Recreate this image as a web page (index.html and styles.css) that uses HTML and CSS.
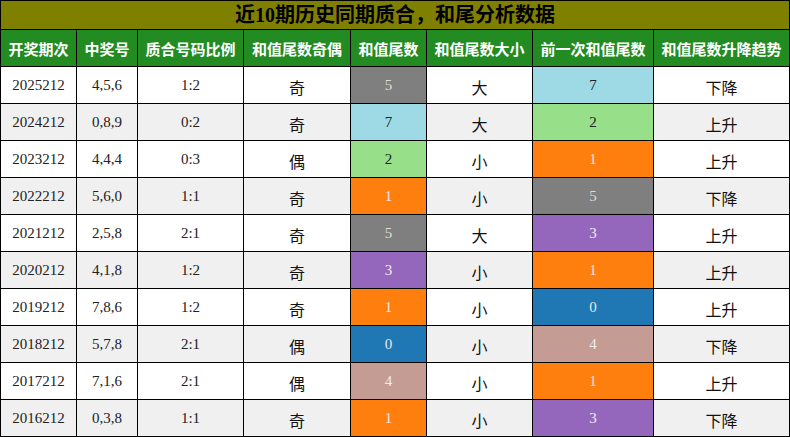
FILE: index.html
```html
<!DOCTYPE html>
<html lang="zh">
<head>
<meta charset="utf-8">
<title>近10期历史同期质合，和尾分析数据</title>
<link rel="stylesheet" href="styles.css">
</head>
<body>
<table class="tbl">
  <colgroup>
    <col class="c1"><col class="c2"><col class="c3"><col class="c4">
    <col class="c5"><col class="c6"><col class="c7"><col class="c8">
  </colgroup>
  <tr class="title-row"><td colspan="8" class="title">近10期历史同期质合，和尾分析数据</td></tr>
  <tr class="head-row">
    <th>开奖期次</th><th>中奖号</th><th>质合号码比例</th><th>和值尾数奇偶</th><th>和值尾数</th><th>和值尾数大小</th><th>前一次和值尾数</th><th>和值尾数升降趋势</th>
  </tr>
  <tr class="row"><td class="num">2025212</td><td class="num">4,5,6</td><td class="num">1:2</td><td class="cjk">奇</td><td class="num t5">5</td><td class="cjk">大</td><td class="num t7">7</td><td class="cjk">下降</td></tr>
  <tr class="row alt"><td class="num">2024212</td><td class="num">0,8,9</td><td class="num">0:2</td><td class="cjk">奇</td><td class="num t7">7</td><td class="cjk">大</td><td class="num t2">2</td><td class="cjk">上升</td></tr>
  <tr class="row"><td class="num">2023212</td><td class="num">4,4,4</td><td class="num">0:3</td><td class="cjk">偶</td><td class="num t2">2</td><td class="cjk">小</td><td class="num t1">1</td><td class="cjk">上升</td></tr>
  <tr class="row alt"><td class="num">2022212</td><td class="num">5,6,0</td><td class="num">1:1</td><td class="cjk">奇</td><td class="num t1">1</td><td class="cjk">小</td><td class="num t5">5</td><td class="cjk">下降</td></tr>
  <tr class="row"><td class="num">2021212</td><td class="num">2,5,8</td><td class="num">2:1</td><td class="cjk">奇</td><td class="num t5">5</td><td class="cjk">大</td><td class="num t3">3</td><td class="cjk">上升</td></tr>
  <tr class="row alt"><td class="num">2020212</td><td class="num">4,1,8</td><td class="num">1:2</td><td class="cjk">奇</td><td class="num t3">3</td><td class="cjk">小</td><td class="num t1">1</td><td class="cjk">上升</td></tr>
  <tr class="row"><td class="num">2019212</td><td class="num">7,8,6</td><td class="num">1:2</td><td class="cjk">奇</td><td class="num t1">1</td><td class="cjk">小</td><td class="num t0">0</td><td class="cjk">上升</td></tr>
  <tr class="row alt"><td class="num">2018212</td><td class="num">5,7,8</td><td class="num">2:1</td><td class="cjk">偶</td><td class="num t0">0</td><td class="cjk">小</td><td class="num t4">4</td><td class="cjk">下降</td></tr>
  <tr class="row"><td class="num">2017212</td><td class="num">7,1,6</td><td class="num">2:1</td><td class="cjk">偶</td><td class="num t4">4</td><td class="cjk">小</td><td class="num t1">1</td><td class="cjk">上升</td></tr>
  <tr class="row alt"><td class="num">2016212</td><td class="num">0,3,8</td><td class="num">1:1</td><td class="cjk">奇</td><td class="num t1">1</td><td class="cjk">小</td><td class="num t3">3</td><td class="cjk">下降</td></tr>
</table>
</body>
</html>
```
FILE: styles.css
```css
html, body {
  margin: 0;
  padding: 0;
  background: #ffffff;
}

.tbl {
  width: 789px;
  table-layout: fixed;
  border-collapse: collapse;
  font-family: "Liberation Serif", "Noto Sans CJK SC", serif;
}

.c1 { width: 76px; }
.c2 { width: 61px; }
.c3 { width: 106px; }
.c4 { width: 107px; }
.c5 { width: 76px; }
.c6 { width: 106px; }
.c7 { width: 121px; }
.c8 { width: 136px; }

.tbl td, .tbl th {
  border: 1px solid #000;
  padding: 0;
  text-align: center;
  vertical-align: middle;
  overflow: hidden;
  white-space: nowrap;
}

.title-row { height: 29px; }
.title {
  background: #808000;
  color: #000;
  font-family: "Liberation Serif", "Noto Sans CJK SC", serif;
  font-weight: bold;
  font-size: 20px;
  line-height: 26px;
}

.head-row { height: 37px; }
.head-row th {
  background: #228b22;
  color: #ffffff;
  font-family: "Noto Sans CJK SC", sans-serif;
  font-weight: bold;
  font-size: 15px;
}

.row { height: 37px; background: #ffffff; }
.row.alt { background: #f0f0f0; }

.num {
  font-family: "Liberation Serif", serif;
  font-size: 15px;
  color: #222;
}

.cjk {
  font-family: "Noto Sans CJK SC", sans-serif;
  font-size: 16px;
  color: #111;
  padding-top: 3px !important;
}

.t0 { background: #1f77b4; color: #e8e8e8; }
.t1 { background: #ff7f0e; color: #f0e8e0; }
.t2 { background: #98df8a; color: #222; }
.t3 { background: #9467bd; color: #eee; }
.t4 { background: #c49c94; color: #eee; }
.t5 { background: #7f7f7f; color: #ddd; }
.t7 { background: #9edae5; color: #222; }
```
